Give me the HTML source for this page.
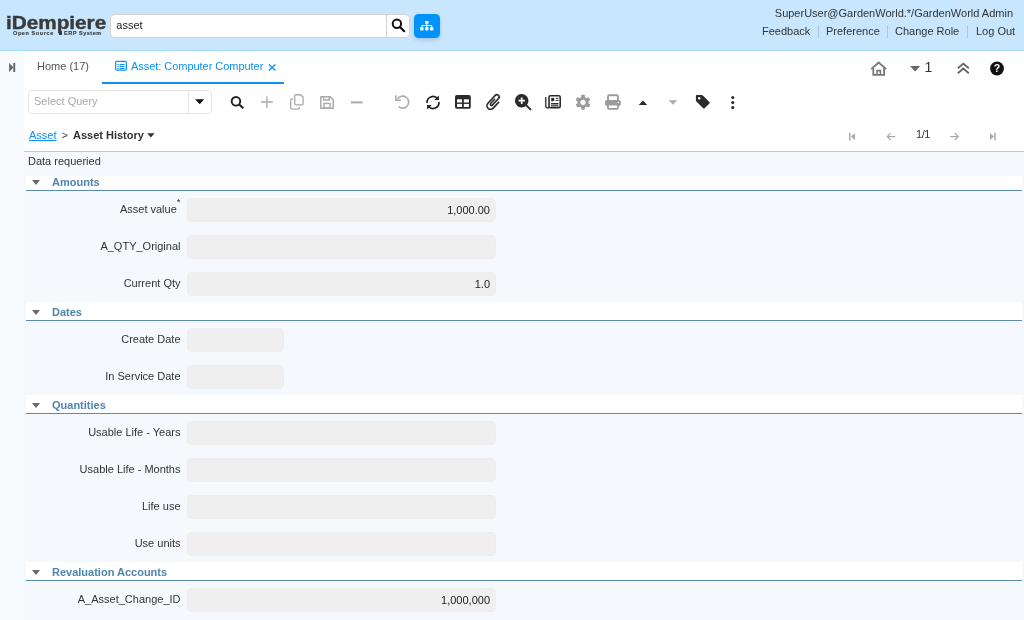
<!DOCTYPE html>
<html>
<head>
<meta charset="utf-8">
<title>iDempiere</title>
<style>
*{box-sizing:border-box;margin:0;padding:0}
html,body{width:1024px;height:620px;overflow:hidden;background:#fff;font-family:"Liberation Sans",Arial,sans-serif;font-size:11px;color:#333}
.abs{position:absolute}
#all{position:absolute;left:0;top:0;width:1024px;height:620px;will-change:transform}
#hdr{position:absolute;left:0;top:0;width:1024px;height:51px;background:#c8e7ff;border-bottom:1px solid #a9dafd}
#logo{position:absolute;left:6.3px;top:12.4px;font-weight:bold;font-size:18.5px;line-height:22px;color:#3a3a3a;transform-origin:0 0;transform:scaleX(1.12);-webkit-text-stroke:0.4px #3a3a3a}
.lsub{position:absolute;top:30px;font-weight:bold;font-size:5.5px;line-height:7px;color:#3a3a3a;white-space:pre;-webkit-text-stroke:.15px #3a3a3a}
#srch{position:absolute;left:110px;top:14px;width:300px;height:24px;border:1px solid #d4d2d0;border-radius:4px;background:#fff}
#srch .t{position:absolute;left:5.3px;top:-1px;line-height:22px;font-size:11px;color:#222}
#srch .b{position:absolute;left:275px;top:0;width:1px;height:22px;background:#d4d2d0}
#orgb{position:absolute;left:414px;top:14px;width:26px;height:24px;border-radius:4.5px;background:#0093f9;box-shadow:0 2px 4px rgba(0,0,0,.16)}
#user{position:absolute;right:11px;top:6px;line-height:14px;font-size:11px;color:#333;white-space:nowrap}
.lk{position:absolute;top:24px;line-height:14px;font-size:11px;color:#333;white-space:nowrap}
.lks{position:absolute;top:25px;width:1px;height:13px;background:#b3c5d3}
#side{position:absolute;left:0;top:52px;width:24px;height:568px;background:#f8fbfe}
#tabs{position:absolute;left:24px;top:51px;width:1000px;height:33px;background:#fff}
.tab{position:absolute;top:8px;line-height:14px;font-size:11px;white-space:nowrap}
#content{position:absolute;left:26px;top:152px;width:998px;height:468px;background:#f5f9fe;box-shadow:-2px 0 0 #f5f9fe}
.grp{position:absolute;left:0;width:996px;background:#fff;border-bottom:1px solid #5b8cab}
.grp b{position:absolute;left:26px;bottom:1px;line-height:14px;font-size:11px;color:#4c86ad}
.grp i{position:absolute;left:5.7px;bottom:5.2px;width:0;height:0;border-left:4.4px solid transparent;border-right:4.4px solid transparent;border-top:5px solid #6a6a6a}
.lbl{position:absolute;left:0;width:154.5px;text-align:right;line-height:14px;font-size:11px;color:#333;white-space:nowrap}
.fld{position:absolute;left:161px;width:309px;height:24px;border:1px solid #ededed;border-radius:4px;background:#efefef;text-align:right;padding-right:5px;line-height:22px;font-size:11px;color:#222}
.fld.d{width:97px}
.lbl sup{font-size:9.5px;line-height:0;position:relative;top:-3.5px;vertical-align:super}
</style>
</head>
<body>
<div id="all">
<div id="hdr">
  <div id="logo">iDempiere</div>
  <div class="lsub" style="left:13.0px;top:30.0px;letter-spacing:0.6px">Open Source</div>
  <div class="lsub" style="left:64.0px;top:30.0px;letter-spacing:0.55px">ERP System</div>
  <div class="abs" style="left:58.5px;top:31px;width:3.2px;height:4.4px;background:#3a3a3a"></div>
  <div id="srch"><span class="t">asset</span><span class="b"></span></div>
  <div id="orgb"></div>
  <div id="user">SuperUser@GardenWorld.*/GardenWorld Admin</div>
  <div class="lk" style="left:762px">Feedback</div><div class="lks" style="left:818px"></div><div class="lk" style="left:826px">Preference</div><div class="lks" style="left:887px"></div><div class="lk" style="left:895px">Change Role</div><div class="lks" style="left:967px"></div><div class="lk" style="left:976px">Log Out</div>
</div>
<div id="side"></div>
<div id="tabs">
  <div class="tab" style="left:13px;color:#555">Home (17)</div>
  <div class="tab" style="left:107px;color:#0b8ff2;letter-spacing:-.04px">Asset: Computer Computer</div>
  <div class="abs" style="left:78px;top:31px;width:182px;height:2px;background:#0b8ff2"></div>
</div>
<div class="abs" style="left:28px;top:90px;width:184px;height:24px;border:1px solid #e4e4e4;border-radius:4px;background:#fff">
  <span class="abs" style="left:5px;top:-1px;line-height:22px;color:#a9a9a9;font-size:11px">Select Query</span>
  <span class="abs" style="left:159px;top:0;width:1px;height:22px;background:#e4e4e4"></span>
</div>
<div class="abs" style="left:29px;top:128px;line-height:14px;font-size:11px;white-space:nowrap"><span style="color:#0b8ff2;text-decoration:underline">Asset</span><span style="margin:0 5px 0 5px;color:#444">&gt;</span><b style="color:#333">Asset History</b></div>
<div class="abs" style="left:916px;top:127px;line-height:14px;font-size:11px;color:#333;letter-spacing:-.45px">1/1</div>
<div class="abs" style="left:24px;top:151px;width:1000px;height:1px;background:#c8c8c8"></div>

<!-- header search icon -->
<svg class="abs" style="left:391px;top:18px" width="15" height="15" viewBox="0 0 15 15"><circle cx="5.9" cy="5.8" r="4.2" fill="none" stroke="#111" stroke-width="2"/><path d="M9 9 L13.2 13.2" stroke="#111" stroke-width="2.2" stroke-linecap="round"/></svg>
<!-- sitemap -->
<svg class="abs" style="left:419px;top:20px" width="16" height="12" viewBox="0 0 16 12"><g fill="#fff"><rect x="6.1" y="1" width="3.4" height="2.8" rx=".5"/><rect x="1.2" y="7" width="3.4" height="3.6" rx=".8"/><rect x="6.1" y="7" width="3.4" height="3.6" rx=".8"/><rect x="11" y="7" width="3.4" height="3.6" rx=".8"/></g><path d="M7.8 3.5V7M2.9 7.2V5.5H12.7V7.2" fill="none" stroke="#fff" stroke-width="1"/></svg>
<!-- collapse -->
<svg class="abs" style="left:8px;top:62px" width="9" height="11" viewBox="0 0 9 11"><path d="M1.4 1.4 L5.2 5.5 L1.4 9.6Z" fill="#666" stroke="#666" stroke-width=".5" stroke-linejoin="round"/><rect x="5.3" y="1" width="1.9" height="9" fill="#666"/></svg>
<!-- tab list icon -->
<svg class="abs" style="left:114px;top:60px" width="14" height="12" viewBox="0 0 14 12"><rect x="1.6" y="1.4" width="10.8" height="8.8" rx="1.2" fill="none" stroke="#0b8ff2" stroke-width="1.2"/><path d="M3.4 4.5h1.3M3.4 6.5h1.3M3.4 8.5h1.3M5.6 4.5h4.9M5.6 6.5h4.9M5.6 8.5h4.9" stroke="#0b8ff2" stroke-width="1"/></svg>
<!-- tab close -->
<svg class="abs" style="left:267px;top:63px" width="10" height="9" viewBox="0 0 10 9"><path d="M1.9 1.5 L8.4 7.5 M8.4 1.5 L1.9 7.5" stroke="#0b8ff2" stroke-width="1.3" fill="none"/></svg>
<!-- select query caret -->
<svg class="abs" style="left:194px;top:98px" width="12" height="8" viewBox="0 0 12 8"><path d="M1.2 1.2 H10.2 L5.7 6.2Z" fill="#111"/></svg>
<!-- toolbar search -->
<svg class="abs" style="left:229.6px;top:95.8px" width="15" height="15" viewBox="0 0 15 15"><circle cx="5.95" cy="5.3" r="4.3" fill="none" stroke="#222" stroke-width="1.9"/><path d="M8.9 8.3 L13.3 12.3" stroke="#222" stroke-width="2.1" stroke-linecap="butt"/></svg>
<!-- plus -->
<svg class="abs" style="left:260px;top:95px" width="14" height="14" viewBox="0 0 14 14"><path d="M1 7H12.8M6.9 1.2V12.9" stroke="#aaa" stroke-width="1.3" fill="none"/></svg>
<!-- copy -->
<svg class="abs" style="left:289px;top:93px" width="16" height="18" viewBox="0 0 16 18"><path d="M6.95 1.75 H11.7 L14.05 4.1 V10.75 Q14.05 11.95 12.85 11.95 H6.95 Q5.75 11.95 5.75 10.75 V2.95 Q5.75 1.75 6.95 1.75Z" fill="none" stroke="#aaa" stroke-width="1.3"/><path d="M3.9 5.85 H2.95 Q1.75 5.85 1.75 7.05 V14.85 Q1.75 16.05 2.95 16.05 H9.05 Q10.25 16.05 10.25 14.85 V14.1" fill="none" stroke="#aaa" stroke-width="1.3" stroke-linecap="round"/></svg>
<!-- save -->
<svg class="abs" style="left:319px;top:95px" width="16" height="15" viewBox="0 0 16 15"><path d="M1.8 1.8 H11.2 L14.2 4.8 V13.2 H1.8Z" fill="none" stroke="#aaa" stroke-width="1.5" stroke-linejoin="round"/><path d="M4.6 2 V5 H10.2 V2" fill="none" stroke="#aaa" stroke-width="1.4"/><rect x="5" y="8.4" width="6" height="4.6" fill="none" stroke="#aaa" stroke-width="1.5"/></svg>
<!-- minus -->
<svg class="abs" style="left:350px;top:100px" width="14" height="5" viewBox="0 0 14 5"><path d="M1 2.4H12.8" stroke="#aaa" stroke-width="2"/></svg>
<!-- undo -->
<svg class="abs" style="left:394px;top:94px" width="17" height="16" viewBox="0 0 17 16"><path d="M3.6 4.9 A6 6 0 1 1 4.6 12.6" fill="none" stroke="#aaa" stroke-width="1.6"/><path d="M1.9 1.2 V6.2 H6.9" fill="none" stroke="#aaa" stroke-width="1.6"/></svg>
<!-- sync -->
<svg class="abs" style="left:425px;top:94px" width="16" height="17" viewBox="0 0 16 17"><g fill="none" stroke="#222" stroke-width="1.7"><path d="M2.02 9.02 A6 6 0 0 1 12.6 4.7"/><path d="M13.98 7.98 A6 6 0 0 1 3.4 12.3"/></g><path d="M13.9 1.4 V6 H9.3Z M2.1 15.6 V11 H6.7Z" fill="#222"/></svg>
<!-- table -->
<svg class="abs" style="left:454px;top:94px" width="18" height="16" viewBox="0 0 18 16"><rect x="1" y="1" width="15.8" height="13.8" rx="1.8" fill="#2b2b2b"/><g fill="#fff"><rect x="3" y="5.3" width="5" height="3.2"/><rect x="9.8" y="5.3" width="5.1" height="3.2"/><rect x="3" y="9.9" width="5" height="3.1"/><rect x="9.8" y="9.9" width="5.1" height="3.1"/></g></svg>
<!-- paperclip -->
<svg class="abs" style="left:485px;top:93px" width="17" height="18" viewBox="0 0 17 18"><g transform="translate(9 9) rotate(43)" fill="none" stroke="#2b2b2b" stroke-width="1.65" stroke-linecap="round"><path d="M3.6 -2.8 V5 A3.6 3.6 0 0 1 -3.6 5 V-5.7 A2.25 2.25 0 0 1 0.9 -5.7 V3.4 A1.15 1.15 0 0 1 -1.4 3.4 V-2.4"/></g></svg>
<!-- search plus -->
<svg class="abs" style="left:514px;top:93px" width="18" height="18" viewBox="0 0 18 18"><circle cx="7.7" cy="7.7" r="6.8" fill="#2b2b2b"/><path d="M12.6 12.6 L16.4 16.4" stroke="#2b2b2b" stroke-width="2" stroke-linecap="round"/><path d="M4.5 7.7H10.9M7.7 4.5V10.9" stroke="#fff" stroke-width="1.7"/></svg>
<!-- newspaper -->
<svg class="abs" style="left:544px;top:94px" width="18" height="16" viewBox="0 0 18 16"><rect x="5" y="1.8" width="11.2" height="11.9" rx="1.4" fill="none" stroke="#2b2b2b" stroke-width="1.6"/><path d="M5 13.8 H3.4 Q1.8 13.8 1.8 12.2 V3" fill="none" stroke="#2b2b2b" stroke-width="1.3"/><rect x="7.2" y="3.9" width="3" height="3.3" fill="#2b2b2b"/><path d="M11.7 4.3H14.5M11.7 6.4H14.5" stroke="#2b2b2b" stroke-width="1"/><path d="M6.9 9.7H14.5M6.9 11.9H14.5" stroke="#2b2b2b" stroke-width="1.4"/></svg>
<!-- cog -->
<svg class="abs" style="left:575px;top:94px" width="16" height="17" viewBox="0 0 16 17"><g transform="translate(8 8.3)"><g fill="#9b9b9b"><rect x="-1.8" y="-7.5" width="3.6" height="15" rx=".8"/><rect x="-1.8" y="-7.5" width="3.6" height="15" rx=".8" transform="rotate(60)"/><rect x="-1.8" y="-7.5" width="3.6" height="15" rx=".8" transform="rotate(120)"/><circle r="5.5"/></g><circle r="2.6" fill="#fff"/></g></svg>
<!-- print -->
<svg class="abs" style="left:604px;top:93px" width="18" height="18" viewBox="0 0 18 18"><path d="M4 7 V3.5 Q4 2.3 5.2 2.3 H12.7 Q13.9 2.3 13.9 3.5 V7" fill="none" stroke="#9b9b9b" stroke-width="1.9"/><rect x="1" y="6.9" width="15.8" height="6" rx="1.9" fill="#9b9b9b"/><rect x="3.95" y="11.6" width="10" height="4.3" rx=".8" fill="#fff" stroke="#9b9b9b" stroke-width="1.8"/><circle cx="14.4" cy="9.4" r=".75" fill="#fff"/></svg>
<!-- caret up -->
<svg class="abs" style="left:638px;top:100px" width="10" height="6" viewBox="0 0 10 6"><path d="M.7 5 L5 .5 L9.3 5Z" fill="#2b2b2b"/></svg>
<!-- caret down grey -->
<svg class="abs" style="left:668px;top:100px" width="10" height="6" viewBox="0 0 10 6"><path d="M.7 .2 L5 4.7 L9.3 .2Z" fill="#aaa"/></svg>
<!-- tag -->
<svg class="abs" style="left:695px;top:94px" width="16" height="16" viewBox="0 0 16 16"><path d="M1.7 .9 H6.6 Q7.3 .9 7.8 1.4 L14.4 8 Q15.1 8.7 14.4 9.4 L9.6 14.2 Q8.9 14.9 8.2 14.2 L1.4 7.4 Q.9 6.9 .9 6.2 V1.7 Q.9 .9 1.7 .9Z" fill="#2b2b2b"/><circle cx="4.2" cy="4.2" r="1.2" fill="#fff"/></svg>
<!-- ellipsis v -->
<svg class="abs" style="left:730px;top:95px" width="6" height="15" viewBox="0 0 6 15"><g fill="#2b2b2b"><circle cx="2.8" cy="2.5" r="1.55"/><circle cx="2.8" cy="7.5" r="1.55"/><circle cx="2.8" cy="12.6" r="1.55"/></g></svg>
<!-- home -->
<svg class="abs" style="left:870px;top:61px" width="18" height="16" viewBox="0 0 18 16"><path d="M1.2 8.2 L8.7 1.5 L16.2 8.2" fill="none" stroke="#777" stroke-width="1.8"/><path d="M3.3 7 V13.9 H14.1 V7" fill="none" stroke="#777" stroke-width="1.8"/><path d="M7 14 V9.6 H10.4 V14" fill="none" stroke="#777" stroke-width="1.6"/></svg>
<!-- caret down tab -->
<svg class="abs" style="left:909px;top:65px" width="12" height="7" viewBox="0 0 12 7"><path d="M1 1 H11.2 L6.1 6.4Z" fill="#666"/></svg>
<div class="abs" style="left:924.4px;top:59px;font-size:14px;line-height:16px;color:#333">1</div>
<!-- angle double up -->
<svg class="abs" style="left:956px;top:62px" width="14" height="13" viewBox="0 0 14 13"><path d="M1.8 6.3 L7.3 1.6 L12.8 6.3 M1.8 11.2 L7.3 6.5 L12.8 11.2" fill="none" stroke="#666" stroke-width="1.8"/></svg>
<!-- help -->
<svg class="abs" style="left:989px;top:61px" width="16" height="16" viewBox="0 0 16 16"><circle cx="8" cy="7.5" r="6.9" fill="#111"/><text x="8" y="11.2" text-anchor="middle" font-family="Liberation Sans, sans-serif" font-weight="bold" font-size="10.5" fill="#fff">?</text></svg>
<!-- breadcrumb caret -->
<svg class="abs" style="left:146px;top:132px" width="10" height="7" viewBox="0 0 10 7"><path d="M1.2 1.3 H8.6 L4.9 5.6Z" fill="#333"/></svg>
<!-- pager -->
<svg class="abs" style="left:848px;top:131px" width="9" height="11" viewBox="0 0 9 11"><rect x="1.1" y="1.6" width="1.5" height="7.8" fill="#aaa"/><path d="M7 1.9 L3 5.5 L7 9.1Z" fill="#aaa"/></svg>
<svg class="abs" style="left:886px;top:132px" width="11" height="10" viewBox="0 0 11 10"><path d="M4.6 1.2 L1.2 4.6 L4.6 8 M1.4 4.6 H9.2" fill="none" stroke="#aaa" stroke-width="1.2"/></svg>
<svg class="abs" style="left:949px;top:132px" width="11" height="10" viewBox="0 0 11 10"><path d="M5.8 1.2 L9.2 4.6 L5.8 8 M9 4.6 H1.2" fill="none" stroke="#aaa" stroke-width="1.2"/></svg>
<svg class="abs" style="left:988px;top:131px" width="9" height="11" viewBox="0 0 9 11"><rect x="6.2" y="1.6" width="1.5" height="7.8" fill="#aaa"/><path d="M2 1.9 L6 5.5 L2 9.1Z" fill="#aaa"/></svg>
<div id="content">
  <div class="abs" style="left:2px;top:2px;line-height:14px;font-size:11px;color:#333">Data requeried</div>
  <div class="grp" style="top:24px;height:15px"><i></i><b>Amounts</b></div>
  <div class="lbl" style="top:50px">Asset value<sup>*</sup></div>
  <div class="fld" style="top:46px">1,000.00</div>
  <div class="lbl" style="top:87px">A_QTY_Original</div>
  <div class="fld" style="top:83px"></div>
  <div class="lbl" style="top:124px">Current Qty</div>
  <div class="fld" style="top:120px">1.0</div>
  <div class="grp" style="top:150px;height:19px"><i></i><b>Dates</b></div>
  <div class="lbl" style="top:180px">Create Date</div>
  <div class="fld d" style="top:176px"></div>
  <div class="lbl" style="top:217px">In Service Date</div>
  <div class="fld d" style="top:213px"></div>
  <div class="grp" style="top:243px;height:19px"><i></i><b>Quantities</b></div>
  <div class="lbl" style="top:273px">Usable Life - Years</div>
  <div class="fld" style="top:269px"></div>
  <div class="lbl" style="top:310px">Usable Life - Months</div>
  <div class="fld" style="top:306px"></div>
  <div class="lbl" style="top:347px">Life use</div>
  <div class="fld" style="top:343px"></div>
  <div class="lbl" style="top:384px">Use units</div>
  <div class="fld" style="top:380px"></div>
  <div class="grp" style="top:410px;height:19px"><i></i><b>Revaluation Accounts</b></div>
  <div class="lbl" style="top:440px">A_Asset_Change_ID</div>
  <div class="fld" style="top:436px">1,000,000</div>
</div>
</div>
</body>
</html>
